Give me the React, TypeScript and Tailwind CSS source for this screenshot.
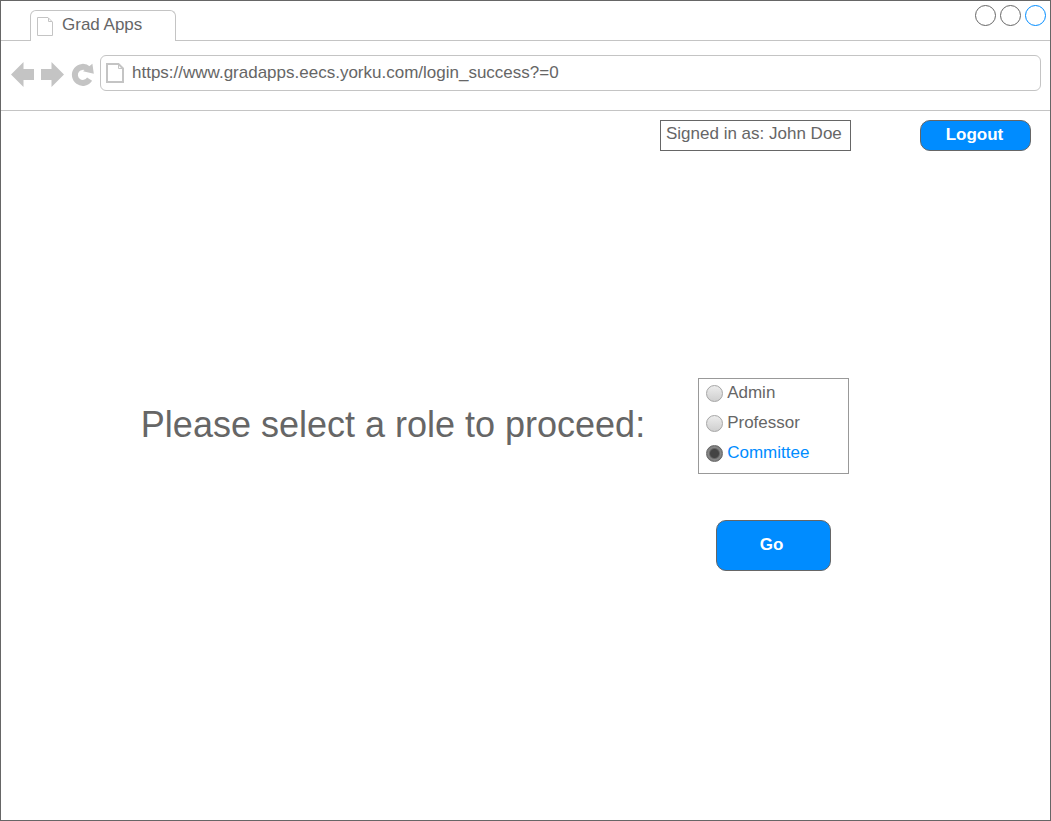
import { useState } from "react";

const roles = ["Admin", "Professor", "Committee"];

function ArrowIcon({ className }: { className: string }) {
  return (
    <svg viewBox="0 0 23 25" className={className} fill="#c4c4c4" aria-hidden="true">
      <path d="M0 12.5L12.5 0V7H23V18H12.5V25Z" />
    </svg>
  );
}

function TabStrip() {
  return (
    <div className="flex h-10 justify-between border-b border-[#c4c4c4] pl-[29px] pr-1">
      <div className="mt-[9px] -mb-px flex w-[146px] rounded-t-md border border-b-0 border-[#c4c4c4] bg-white pl-1.5">
        <svg viewBox="0 0 16 19" className="mt-1.5 h-[19px] w-4" fill="none" stroke="#c4c4c4" aria-hidden="true">
          <path d="M0.5 0.5H11L15.5 5V18.5H0.5Z" />
          <path d="M11.5 1V4.5H15" />
        </svg>
        <span className="ml-[9px] mt-1 leading-5">Grad Apps</span>
      </div>
      <div className="mt-1 flex gap-1">
        <button type="button" aria-label="Minimize" className="size-[21px] rounded-full border border-[#666]" />
        <button type="button" aria-label="Maximize" className="size-[21px] rounded-full border border-[#666]" />
        <button type="button" aria-label="Close" className="size-[21px] rounded-full border border-[#008cff]" />
      </div>
    </div>
  );
}

function Toolbar() {
  const [url, setUrl] = useState("https://www.gradapps.eecs.yorku.com/login_success?=0");
  return (
    <div className="flex h-[70px] border-b border-[#c4c4c4] pl-2.5 pr-[9px] pt-3.5">
      <div className="mt-[7px] flex h-[25px] gap-[7px]">
        <button type="button" aria-label="Back">
          <ArrowIcon className="h-[25px] w-[23px]" />
        </button>
        <button type="button" aria-label="Forward">
          <ArrowIcon className="h-[25px] w-[23px] rotate-180" />
        </button>
        <button type="button" aria-label="Reload">
          <svg viewBox="0 0 23 25" className="h-[25px] w-[23px]" aria-hidden="true">
            <path d="M18.6 17.2A8 8 0 1 1 17.2 6.9" fill="none" stroke="#c4c4c4" strokeWidth="6" />
            <path d="M21.4 1.8L22.8 11.8L12 9.2Z" fill="#c4c4c4" />
          </svg>
        </button>
      </div>
      <div className="ml-1.5 flex h-9 min-w-0 flex-1 rounded-md border border-[#c4c4c4] pl-[5px]">
        <svg viewBox="0 0 18 20" className="mt-[7px] h-5 w-[18px] shrink-0" fill="none" stroke="#c4c4c4" aria-hidden="true">
          <path d="M1 1H12.5L17 5.5V19H1Z" strokeWidth="2" />
          <path d="M12.5 1.5V5.5H16.5" />
        </svg>
        <input
          aria-label="Address"
          value={url}
          onChange={(e) => setUrl(e.target.value)}
          className="ml-2 mt-[7px] h-5 min-w-0 flex-1 leading-5 outline-none"
        />
      </div>
    </div>
  );
}

export default function App() {
  const [role, setRole] = useState("Committee");
  return (
    <div className="flex min-h-screen flex-col border border-[#666] bg-white font-['Liberation_Sans',Arial,sans-serif] text-[17px] text-[#666]">
      <TabStrip />
      <Toolbar />
      <main className="flex flex-1 flex-col">
        <header className="flex justify-end gap-[69px] pr-[19px] pt-[9px]">
          <p className="h-[31px] border border-[#666] px-[5px] pt-[3px] leading-5 w-[191px] whitespace-nowrap">
            Signed in as: John Doe
          </p>
          <button
            type="button"
            className="h-[31px] w-[111px] rounded-[10px] border border-[#666] bg-[#008cff] pb-0.5 pr-0.5 font-bold leading-5 text-white"
          >
            Logout
          </button>
        </header>
        <form
          onSubmit={(e) => e.preventDefault()}
          className="flex flex-1 items-center justify-center pb-[22px] pr-[61px]"
        >
          <div className="grid grid-cols-[auto_151px] gap-x-[53px] gap-y-[46px]">
            <h1 id="role-prompt" className="self-center pb-0.5 text-[36px] leading-10">
              Please select a role to proceed:
            </h1>
            <div role="radiogroup" aria-labelledby="role-prompt" className="h-24 border border-[#999] pl-[7px] pt-1">
              {roles.map((name) => (
                <label
                  key={name}
                  className="flex h-[30px] gap-1 leading-5 has-checked:text-[#008cff]"
                >
                  <input
                    type="radio"
                    name="role"
                    value={name}
                    checked={role === name}
                    onChange={() => setRole(name)}
                    className="mt-0.5 size-[17px] shrink-0 appearance-none rounded-full border border-[#a5a5a5] bg-[linear-gradient(#ececec,#cfcfcf)] checked:border-[#666] checked:bg-[radial-gradient(circle,#444_0,#444_4px,#888_6px,#777_8px)]"
                  />
                  {name}
                </label>
              ))}
            </div>
            <button
              type="submit"
              className="col-start-2 ml-[18px] h-[51px] w-[115px] rounded-[10px] border border-[#666] bg-[#008cff] pb-0.5 pr-1 font-bold leading-5 text-white"
            >
              Go
            </button>
          </div>
        </form>
      </main>
    </div>
  );
}
